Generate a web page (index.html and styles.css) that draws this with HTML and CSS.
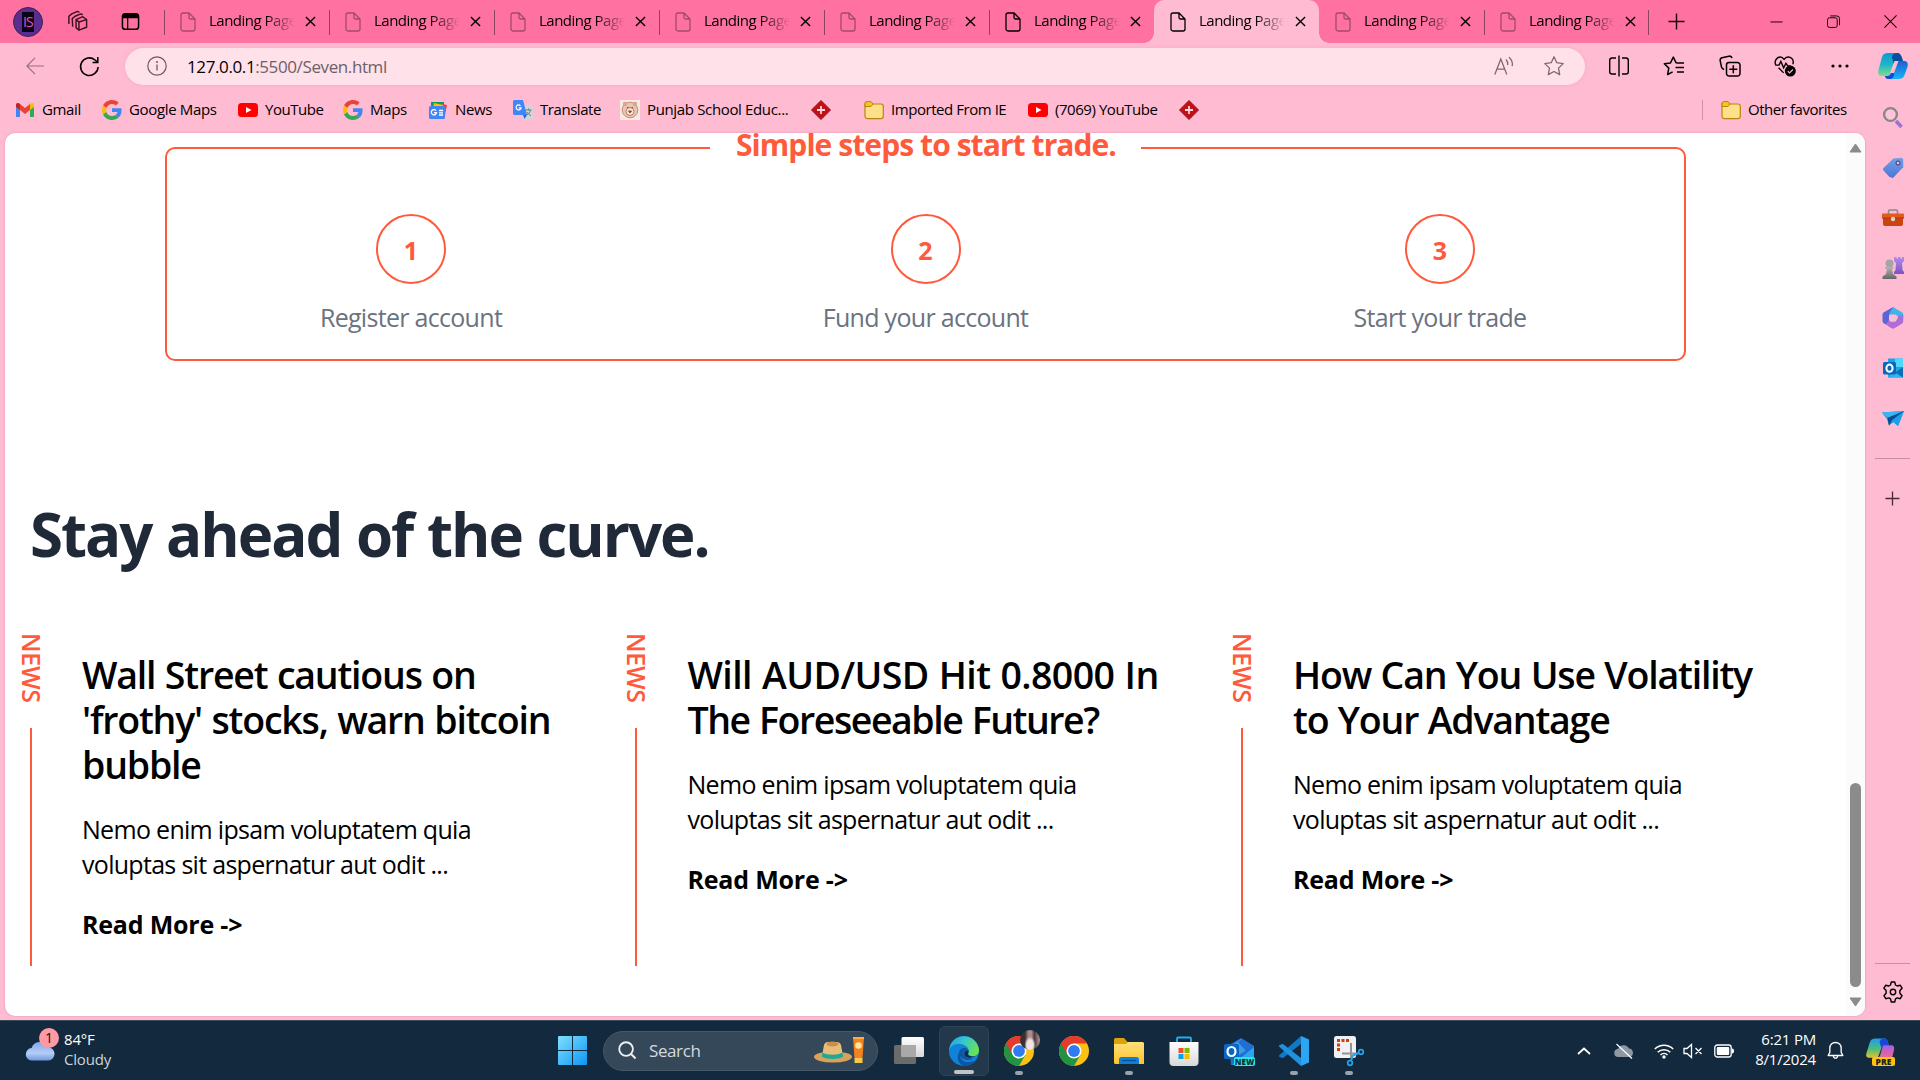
FILE: index.html
```html
<!DOCTYPE html>
<html lang="en">
<head>
<meta charset="utf-8">
<title>Landing Page</title>
<link rel="stylesheet" href="styles.css">
</head>
<body>
<svg class="defs" aria-hidden="true">
  <defs>
    <linearGradient id="gBlue" x1="0" y1="0" x2="1" y2="1"><stop offset="0" stop-color="#7fe0ff"/><stop offset="1" stop-color="#0c96f5"/></linearGradient>
    <linearGradient id="gTag" x1="0" y1="0" x2="0" y2="1"><stop offset="0" stop-color="#6f9fe8"/><stop offset="1" stop-color="#4a78d6"/></linearGradient>
    <linearGradient id="gCopA" x1="0" y1="0" x2="0" y2="1"><stop offset="0" stop-color="#0b9ad6"/><stop offset=".5" stop-color="#1fb5c9"/><stop offset="1" stop-color="#7be08a"/></linearGradient>
    <linearGradient id="gCopB" x1="0" y1="0" x2="0" y2="1"><stop offset="0" stop-color="#1f5fd0"/><stop offset="1" stop-color="#18b4f8"/></linearGradient>
    <linearGradient id="gCopC" x1="0" y1="0" x2="0" y2="1"><stop offset="0" stop-color="#1d9cf0"/><stop offset=".55" stop-color="#4bbf7a"/><stop offset="1" stop-color="#e8c22a"/></linearGradient>
    <linearGradient id="gCopD" x1="0" y1="0" x2="0" y2="1"><stop offset="0" stop-color="#a45bf0"/><stop offset="1" stop-color="#ef6a8a"/></linearGradient>
    <linearGradient id="gPurple" x1="0" y1="0" x2="0" y2="1"><stop offset="0" stop-color="#b48af0"/><stop offset="1" stop-color="#7a55c0"/></linearGradient>
    <linearGradient id="gGray" x1="0" y1="0" x2="0" y2="1"><stop offset="0" stop-color="#b5b5b5"/><stop offset="1" stop-color="#666"/></linearGradient>
    <linearGradient id="gFold" x1="0" y1="0" x2="0" y2="1"><stop offset="0" stop-color="#ffe07a"/><stop offset="1" stop-color="#fdc22f"/></linearGradient>
    <linearGradient id="gCloud" x1="0" y1="0" x2="0" y2="1"><stop offset="0" stop-color="#86a8ea"/><stop offset=".6" stop-color="#b4cdf7"/><stop offset="1" stop-color="#6f97e0"/></linearGradient>
    <linearGradient id="gEdgeT" x1="0" y1="0" x2="1" y2=".4"><stop offset="0" stop-color="#1f9fe0"/><stop offset=".5" stop-color="#35c6d0"/><stop offset="1" stop-color="#66e05a"/></linearGradient>
    <linearGradient id="gWhite" x1="0" y1="0" x2="0" y2="1"><stop offset="0" stop-color="#fff"/><stop offset="1" stop-color="#d8d8d8"/></linearGradient>
    <symbol id="page" viewBox="0 0 16 20"><path d="M3 1h6l6 6v10a2 2 0 0 1-2 2H3a2 2 0 0 1-2-2V3a2 2 0 0 1 2-2zM9 1v4.500a1.500 1.500 0 0 0 1.500 1.500H15" fill="none" stroke="currentColor" stroke-width="1.300"/></symbol>
    <symbol id="x" viewBox="0 0 12 12"><path d="M1 1l10 10M11 1L1 11" fill="none" stroke="currentColor" stroke-width="1.500"/></symbol>
    <symbol id="google" viewBox="0 0 48 48"><path fill="#ea4335" d="M24 9.500c3.540 0 6.710 1.220 9.210 3.600l6.850-6.850C35.900 2.380 30.470 0 24 0 14.620 0 6.510 5.380 2.560 13.220l7.980 6.190C12.430 13.720 17.740 9.500 24 9.500z"/><path fill="#4285f4" d="M46.980 24.550c0-1.570-.15-3.090-.38-4.550H24v9.020h12.940c-.58 2.960-2.260 5.480-4.780 7.180l7.730 6c4.510-4.180 7.090-10.360 7.090-17.650z"/><path fill="#fbbc05" d="M10.530 28.590c-.48-1.450-.76-2.990-.76-4.590s.27-3.140.76-4.590l-7.980-6.190C.92 16.460 0 20.120 0 24c0 3.880.92 7.540 2.560 10.780l7.970-6.190z"/><path fill="#34a853" d="M24 48c6.480 0 11.930-2.130 15.890-5.810l-7.730-6c-2.150 1.450-4.920 2.300-8.160 2.300-6.260 0-11.570-4.220-13.470-9.910l-7.980 6.190C6.510 42.620 14.620 48 24 48z"/></symbol>
    <symbol id="youtube" viewBox="0 0 20 20"><rect y="3" width="20" height="14" rx="3.500" fill="#f00"/><path d="M8 7l5.500 3L8 13z" fill="#fff"/></symbol>
    <symbol id="diamond" viewBox="0 0 20 20"><path d="M10 .5L19.500 10 10 19.500.5 10z" fill="#c01118" stroke="#a00c12" stroke-linejoin="round"/><path d="M10 6v8M6 10h8" stroke="#ffd5d5" stroke-width="1.800"/></symbol>
    <symbol id="folder" viewBox="0 0 20 20"><path d="M1 4.500A2.500 2.500 0 0 1 3.500 2h3l2 2H17a2.300 2.300 0 0 1 2.300 2.300v10A2.300 2.300 0 0 1 17 18.600H3.500A2.500 2.500 0 0 1 1 16.100z" fill="#ffe08a" stroke="#b8860b" stroke-width="1.200"/><path d="M1 6.500V4a2 2 0 0 1 2-2.400h4L9 4 7 6.500z" fill="#f6c524" stroke="#b8860b"/></symbol>
    <symbol id="chrome" viewBox="0 0 30 30"><circle cx="15" cy="15" r="15" fill="#fbc116"/><path d="M2 7.500A15 15 0 0 0 15 30l6.500-11.200L15 15z" fill="#229342"/><path d="M2 7.500A15 15 0 0 1 28 7.500H15L8.500 18.700z" fill="#e33b2e"/><circle cx="15" cy="15" r="7.500" fill="#fff"/><circle cx="15" cy="15" r="5.900" fill="#2f7bf2"/></symbol>
  </defs>
</svg>

<div class="window">
  <header class="tabstrip">
    <div class="profile"><span class="profile-text">IS</span></div>
    <svg class="ws" viewBox="0 0 24 24"><g fill="none" stroke="#3b1020" stroke-width="1.500" stroke-linejoin="round"><path d="M10.500 10l7-3 4 3v8l-8 3-3-2.500zM7 17.500L6.500 9l3-2.500 6-2.500 2 1M3 14.500L3 6.500l3-2.500 6-2.500 2 1"/><path d="M13.500 12.500V21M10.500 10l3 2.500 8-2.500"/></g></svg>
    <svg class="ta" viewBox="0 0 20 20"><rect x="1.500" y="1.800" width="17" height="16.400" rx="3" fill="none" stroke="#000" stroke-width="1.600"/><path d="M1.500 6.500V4a2.500 2.500 0 0 1 2.500-2.500h12A2.500 2.500 0 0 1 18.500 4v2.500z"/><path d="M7 6v12" stroke="#000" stroke-width="1.400"/></svg>
    <nav class="tabs">
      <div class="tab"><svg class="fav"><use href="#page"/></svg><span class="tab-title">Landing Page</span><svg class="close"><use href="#x"/></svg></div>
      <div class="tab"><svg class="fav"><use href="#page"/></svg><span class="tab-title">Landing Page</span><svg class="close"><use href="#x"/></svg></div>
      <div class="tab"><svg class="fav"><use href="#page"/></svg><span class="tab-title">Landing Page</span><svg class="close"><use href="#x"/></svg></div>
      <div class="tab"><svg class="fav"><use href="#page"/></svg><span class="tab-title">Landing Page</span><svg class="close"><use href="#x"/></svg></div>
      <div class="tab"><svg class="fav"><use href="#page"/></svg><span class="tab-title">Landing Page</span><svg class="close"><use href="#x"/></svg></div>
      <div class="tab loaded"><svg class="fav"><use href="#page"/></svg><span class="tab-title">Landing Page</span><svg class="close"><use href="#x"/></svg></div>
      <div class="tab loaded active"><svg class="fav"><use href="#page"/></svg><span class="tab-title">Landing Page</span><svg class="close"><use href="#x"/></svg></div>
      <div class="tab no-sep"><svg class="fav"><use href="#page"/></svg><span class="tab-title">Landing Page</span><svg class="close"><use href="#x"/></svg></div>
      <div class="tab last"><svg class="fav"><use href="#page"/></svg><span class="tab-title">Landing Page</span><svg class="close"><use href="#x"/></svg></div>
    </nav>
    <svg class="newtab" viewBox="0 0 18 18"><path d="M9 .5v17M.5 9h17" stroke="#1c060d" stroke-width="1.500"/></svg>
    <div class="winctl">
      <svg viewBox="0 0 14 14"><path d="M.5 7.500h13" stroke="#000"/></svg>
      <svg viewBox="0 0 14 14"><rect x=".6" y="3" width="10.400" height="10.400" rx="2" fill="none" stroke="#000"/><path d="M3.500 1h7a3 3 0 0 1 3 3v7" fill="none" stroke="#000"/></svg>
      <svg viewBox="0 0 14 14"><path d="M.5.5l13 13M13.500.5l-13 13" stroke="#000" stroke-width="1.100"/></svg>
    </div>
  </header>

  <div class="body">
    <div class="main">
      <div class="toolbar">
        <svg class="back" viewBox="0 0 20 20"><path d="M20 10H1M10 1l-9 9 9 9" fill="none" stroke="#9d6d7e" stroke-width="1.300"/></svg>
        <svg class="reload" viewBox="0 0 22 22"><path d="M20 11.500a9.200 9.200 0 1 1-3.200-7.300L19.500 6.500M19.700 1v5.700h-5.500" fill="none" stroke="#000" stroke-width="1.600"/></svg>
        <div class="address">
          <svg class="info" viewBox="0 0 20 20"><circle cx="10" cy="10" r="9.200" fill="none" stroke="#6b5b61" stroke-width="1.200"/><path d="M10 8.500v6" stroke="#6b5b61" stroke-width="1.300"/><circle cx="10" cy="5.900" r="1" fill="#6b5b61"/></svg>
          <span class="url"><b>127.0.0.1</b>:5500/Seven.html</span>
          <svg class="aloud" viewBox="0 0 20 20"><path d="M.8 18.500L6.800 3l6 15.500M3 13.200h7.600M12 3.500c1.500 1.500 2 3.500 1.700 5.500M15 1.200c2.600 2.300 3.800 5.500 3.200 9" fill="none" stroke="#7c6a70" stroke-width="1.300"/></svg>
          <svg class="star" viewBox="0 0 22 22"><path d="M11 1.800l2.800 5.900 6.400.9-4.700 4.500 1.200 6.500-5.700-3.100-5.700 3.100 1.200-6.500L1.800 8.600l6.400-.9z" fill="none" stroke="#7c6a70" stroke-width="1.300" stroke-linejoin="round"/></svg>
        </div>
        <div class="tools">
          <svg viewBox="0 0 22 22"><path d="M8 3H4a2.300 2.300 0 0 0-2.300 2.300v11.400A2.300 2.300 0 0 0 4 19h4M14 3h4a2.300 2.300 0 0 1 2.300 2.300v11.400A2.300 2.300 0 0 1 18 19h-4M11 .5v21" fill="none" stroke="#000" stroke-width="1.400"/></svg>
          <svg viewBox="0 0 22 22"><path d="M13.500 8L13 7.600l-2.700-5.500-2.800 5.800-6.200.9 4.500 4.300-1.200 6.500 5-2.800M13.500 8H21M12.500 12.500H21M14 17h7" fill="none" stroke="#000" stroke-width="1.500" stroke-linejoin="round"/></svg>
          <svg viewBox="0 0 22 22"><path d="M5 14.500L3.600 13.600A3 3 0 0 1 2.500 12L1.200 5.800A2.600 2.600 0 0 1 3 2.800l7-1.600a2.600 2.600 0 0 1 3 2M10 7.500h8.500A2.500 2.500 0 0 1 21 10v8.500a2.500 2.500 0 0 1-2.500 2.500H10a2.500 2.500 0 0 1-2.500-2.500V10A2.500 2.500 0 0 1 10 7.500zM14.300 10.300v8M10.300 14.300h8" fill="none" stroke="#000" stroke-width="1.500"/></svg>
          <svg viewBox="0 0 24 24"><path d="M2 11C-.5 6 4 1 8.500 2.500L11 4.700l2.500-2.200C18 1 22.500 5 20.500 10M1.500 11h4l2-4 3 7 2.500-5 2 3h3M5 14l5.500 5.500" fill="none" stroke="#000" stroke-width="1.500"/><circle cx="17.800" cy="17.500" r="6"/><path d="M15 17.600l2 2 3.600-3.800" fill="none" stroke="#ffbbd2" stroke-width="1.300"/></svg>
          <svg viewBox="0 0 22 22"><circle cx="3" cy="11" r="1.600"/><circle cx="10" cy="11" r="1.600"/><circle cx="17" cy="11" r="1.600"/></svg>
        </div>
      </div>

      <div class="favorites">
        <div class="bm"><svg viewBox="0 0 20 20"><path d="M1 17V5l4 3v9z" fill="#4285f4"/><path d="M15 17V8l4-3v12z" fill="#34a853"/><path d="M5 10V4l5 4 5-4v6l-5 4z" fill="#ea4335"/><path d="M1 7V4.500C1 2.800 3 2.500 4 3.300L5 4v6z" fill="#c5221f"/><path d="M19 7V4.500c0-1.700-2-2-3-1.200L15 4v6z" fill="#fbbc04"/></svg><span>Gmail</span></div>
        <div class="bm"><svg><use href="#google"/></svg><span>Google Maps</span></div>
        <div class="bm"><svg><use href="#youtube"/></svg><span class="snug">YouTube</span></div>
        <div class="bm"><svg><use href="#google"/></svg><span>Maps</span></div>
        <div class="bm"><svg viewBox="0 0 20 20"><path d="M3 2h13v6H3z" fill="#0c9d58"/><path d="M14 4l5 1-2 10h-3z" fill="#ea4335"/><path d="M6 3l9 2v3H5z" fill="#ffc107"/><rect x="1" y="6" width="16" height="13" rx="1.500" fill="#4285f4"/><path d="M8 10.700a2.600 2.600 0 1 0 .5 2H6M11 10.500h4M11 12.800h4M11 15h4" fill="none" stroke="#fff" stroke-width="1.300"/></svg><span>News</span></div>
        <div class="bm"><svg viewBox="0 0 20 20"><rect x="8" y="5" width="12" height="14.500" rx="1.500" fill="#d4d4d8"/><path d="M1.500 0H10l4 15H1.500A1.500 1.500 0 0 1 0 13.500v-12A1.500 1.500 0 0 1 1.500 0z" fill="#4285f4"/><path d="M7.500 5.800a2.500 2.500 0 1 0 .6 2H5.800" fill="none" stroke="#fff" stroke-width="1.200"/><path d="M12.500 10h6M15.500 8.500V10M17.500 10c-.5 2.500-2 4-3.500 5M14 12c1 2 2.500 3 4 3.500" fill="none" stroke="#607d8b"/><path d="M10 15h4l-2.500 4z" fill="#3067d6"/></svg><span class="snug">Translate</span></div>
        <div class="bm"><svg viewBox="0 0 20 20"><rect width="20" height="20" fill="#f6ebe4"/><circle cx="10" cy="10" r="7.800" fill="#e9c5b2" stroke="#c98f76"/><circle cx="5" cy="4" r="2.200" fill="#d8a58e"/><circle cx="15" cy="4" r="2.200" fill="#d8a58e"/><circle cx="10" cy="11.500" r="4" fill="#f7e5db" stroke="#b87a60"/><path d="M7 7.500h1.500M11.500 7.500H13M8.500 11h3L10 13z" stroke="#8a5040" fill="#8a5040"/></svg><span>Punjab School Educ...</span></div>
        <div class="bm"><svg><use href="#diamond"/></svg></div>
        <div class="bm"><svg><use href="#folder"/></svg><span class="snug">Imported From IE</span></div>
        <div class="bm"><svg><use href="#youtube"/></svg><span class="snug">(7069) YouTube</span></div>
        <div class="bm"><svg><use href="#diamond"/></svg></div>
        <div class="bm other"><svg><use href="#folder"/></svg><span class="snug">Other favorites</span></div>
      </div>

      <div class="viewport">
        <main class="page">
          <fieldset class="steps">
            <legend>Simple steps to start trade.</legend>
            <div class="step-grid">
              <div class="step"><span class="num">1</span><p>Register account</p></div>
              <div class="step"><span class="num">2</span><p>Fund your account</p></div>
              <div class="step"><span class="num">3</span><p>Start your trade</p></div>
            </div>
          </fieldset>
          <h1>Stay ahead of the curve.</h1>
          <section class="news">
            <article class="card">
              <div class="rail"><span>NEWS</span></div>
              <div class="content">
                <h2>Wall Street cautious on<br>'frothy' stocks, warn bitcoin<br>bubble</h2>
                <p>Nemo enim ipsam voluptatem quia<br>voluptas sit aspernatur aut odit ...</p>
                <a>Read More -&gt;</a>
              </div>
            </article>
            <article class="card">
              <div class="rail"><span>NEWS</span></div>
              <div class="content">
                <h2><span class="loose">Will AUD/USD Hit 0.8000 In</span><br><span class="tight">The Foreseeable Future?</span></h2>
                <p>Nemo enim ipsam voluptatem quia<br>voluptas sit aspernatur aut odit ...</p>
                <a>Read More -&gt;</a>
              </div>
            </article>
            <article class="card">
              <div class="rail"><span>NEWS</span></div>
              <div class="content">
                <h2>How Can You Use Volatility<br>to Your Advantage</h2>
                <p>Nemo enim ipsam voluptatem quia<br>voluptas sit aspernatur aut odit ...</p>
                <a>Read More -&gt;</a>
              </div>
            </article>
          </section>
        </main>
        <div class="scrollbar">
          <svg viewBox="0 0 13 10"><path d="M6.500 1L12 9H1z" fill="#8b8b8b" stroke="#8b8b8b" stroke-linejoin="round"/></svg>
          <div class="thumb"></div>
          <svg viewBox="0 0 13 10"><path d="M6.500 9L12 1H1z" fill="#8b8b8b" stroke="#8b8b8b" stroke-linejoin="round"/></svg>
        </div>
      </div>
    </div>

    <aside class="sidebar">
      <svg class="copilot" viewBox="0 0 30 28"><path d="M10 1h9c3 0 4 2 5 5l1 3h-6c-2 0-3 1-3.500 3L13 21c-.5 2-1.500 3-3.500 3H4c-3 0-4.500-2-3.500-6L4 5c1-3 3-4 6-4z" fill="url(#gCopA)"/><path d="M19 1c3 0 4 2 5 5l1 3h-6c-2 0-3 1-3.500 3L14 5c.8-3 2-4 5-4z" fill="#0a4f9a"/><path d="M20 27h-9c-3 0-3.500-1-4-3h2.500c2 0 3-1 3.500-3l3-10c.5-1.500 1.500-2 3-2h7c3 0 4.500 2 3.500 6l-3 8c-1 3-3 4-6.500 4z" fill="url(#gCopB)"/><path d="M11 27c-3 0-3.500-1-4-3h2.500c2 0 3-1 3.500-3l1-3 2 4c0 3-2 5-5 5z" fill="#1746d8"/><path d="M16.500 9h4l-4.500 12h-4z" fill="#ffbbd2"/></svg>
      <svg viewBox="0 0 22 22"><path d="M14 14l5.500 6" stroke="#9a70dc" stroke-width="3.600"/><circle cx="8.500" cy="7.500" r="6.400" fill="#ffc4d8" stroke="#888" stroke-width="2.400"/></svg>
      <svg viewBox="0 0 22 22"><path d="M11.500 1.500l8-.8 1.700 1.600v8L11 21 7.500 20 1.500 13.500 1 11.500z" fill="url(#gTag)"/><circle cx="16" cy="6" r="2" fill="#ffbbd2" stroke="#3a2a78"/></svg>
      <svg viewBox="0 0 22 22"><path d="M6.500 7V4.500A1.500 1.500 0 0 1 8 3h6a1.500 1.500 0 0 1 1.500 1.500V7" fill="none" stroke="#8a8a8a" stroke-width="1.600"/><path d="M1 6.500h20a1 1 0 0 1 1 1V11H0V7.500a1 1 0 0 1 1-1z" fill="#e55a1c"/><path d="M1 11h20v6a2 2 0 0 1-2 2H3a2 2 0 0 1-2-2z" fill="#cb4410"/><path d="M0 11h22" stroke="#a83408"/><circle cx="11" cy="12" r="2.200" fill="#d4d4d4"/></svg>
      <svg viewBox="0 0 22 22"><path d="M12 1V0h2.500v1.500H16V0h2.500v1.500H20V0h2v4l-2 2 .5 7 1.500 2v2H12v-2l1.500-2 .5-7-2-2z" fill="url(#gPurple)"/><circle cx="7.500" cy="6.500" r="4" fill="#a5a5a5"/><path d="M3 10h9l-1 2h-1l1 5 3.500 2.500V22H.5v-2.500L4 17l1-5H3z" fill="url(#gGray)"/></svg>
      <svg viewBox="0 0 22 22"><path d="M11 .3L1.800 5.500C1 6 .7 6.700.7 7.500v7c0 .8.400 1.500 1.100 1.900L7 13V8l4.500-2.500L14 2z" fill="#6f6be0"/><path d="M11 .3l9 5c.8.5 1.200 1.200 1.200 2V12L16 9 13.500 8h-5L7 8l-.5-4.500z" fill="#42b4ea"/><path d="M21.200 8v6.500c0 .8-.4 1.500-1.200 2L11 21.800 6 19l7.500-4.500L15.500 11l.5-2z" fill="#9a74dc"/><path d="M1.500 16l5.500-3 1.500 1.500h5L21 12v2.500c0 .8-.4 1.500-1.200 2L12.500 21c-1 .6-2 .6-3 0z" fill="#b36bd6"/><path d="M11 .3L1.800 5.500C1 6 .7 6.700.7 7.500v7l3 3L7 13V7z" fill="#5a66d8"/><path d="M8.500 7.500h5l2.200 3.600-2.200 3.400h-5L6.700 11z" fill="#ffbbd2"/></svg>
      <svg viewBox="0 0 22 22"><path d="M6 1.500h14a1 1 0 0 1 1 1v18H6z" fill="#1aa4e4"/><path d="M13 1.500h8V10h-8z" fill="#4fd8ff"/><path d="M12 15l9-5v10.500H6z" fill="#28b7f0"/><path d="M13 15.500l8-5.500v10.500z" fill="#0f6db5"/><rect x="1" y="5" width="13" height="12.500" rx="1.500" fill="#0868c0"/><ellipse cx="7.500" cy="11.200" rx="3.100" ry="3.600" fill="none" stroke="#fff" stroke-width="2"/></svg>
      <svg viewBox="0 0 22 22"><path d="M0 5.500L22 4l-6 15-4.500-4L7 18.500 5 12z" fill="#1b8fdc"/><path d="M0 5.500L22 4 5.500 10.500z" fill="#37b8f2"/><path d="M22 4L5.500 11 7 18.500 10 13z" fill="#074c8c"/><path d="M22 4l-6 15-6-5z" fill="#209fe8"/></svg>
      <hr>
      <svg class="plus" viewBox="0 0 16 16"><path d="M8 .5v15M.5 8h15" stroke="#4a2a35" stroke-width="1.400"/></svg>
      <div class="spacer"></div>
      <hr>
      <svg class="gear" viewBox="0 0 22 22"><path d="M9.300 1h3.400l.8 3 1.700 1 3-.8 1.900 3-2.200 2.300v2.800l2.200 2.400-1.900 3-3-.8-1.700 1-.8 3.100H9.300l-.8-3.100-1.700-1-3 .8-1.900-3 2.200-2.400V9.500L1.900 7.200l1.900-3 3 .8 1.700-1z" fill="none" stroke="#000" stroke-width="1.400" stroke-linejoin="round"/><circle cx="11" cy="11" r="2.700" fill="none" stroke="#000" stroke-width="1.400"/></svg>
    </aside>
  </div>

  <footer class="taskbar">
    <div class="weather">
      <div class="cloud"><svg viewBox="0 0 30 22"><path d="M7 21.500a6.500 6.500 0 0 1-.8-13A9 9 0 0 1 23 7.500a7 7 0 0 1 .5 14z" fill="url(#gCloud)"/></svg><span class="badge">1</span></div>
      <div class="wtext"><span>84°F</span><span class="dim">Cloudy</span></div>
    </div>
    <div class="apps">
      <svg class="start" viewBox="0 0 29 29"><path d="M1 0h13v14H0V1a1 1 0 0 1 1-1zM15 0h13a1 1 0 0 1 1 1v13H15zM0 15h14v14H1a1 1 0 0 1-1-1zM15 15h14v13a1 1 0 0 1-1 1H15z" fill="url(#gBlue)"/></svg>
      <div class="search">
        <svg class="mag" viewBox="0 0 20 20"><circle cx="8.500" cy="8.500" r="7.200" fill="none" stroke="#eef1f4" stroke-width="1.900"/><path d="M13.500 13.500l5 5" stroke="#eef1f4" stroke-width="2.100"/></svg>
        <span>Search</span>
        <svg class="hat" viewBox="0 0 50 28"><ellipse cx="19" cy="20" rx="19" ry="5.500" fill="#d9a25a"/><path d="M8 19L10 8c1-4 5-3 8-3s8-1 9 3l2 11c-5 3-16 3-21 0z" fill="#e8bd7c"/><ellipse cx="18.500" cy="7" rx="6" ry="2.500" fill="#c6914c"/><path d="M8.500 15.500c5 3 15 3 20 0l.7 4.200c-6 3-15.500 3-21.400 0z" fill="#20a890"/><path d="M39 0h11l-1.500 21h-8z" fill="#f58220"/><path d="M39 0h11v2H39z" fill="#ffad42"/><circle cx="44.500" cy="8.500" r="3.300" fill="#ffe7a0"/><path d="M40.500 21h8v5h-8z" fill="#f7c64a"/></svg>
      </div>
      <div class="app"><svg viewBox="0 0 30 30"><rect x="0" y="9" width="22" height="19" rx="1.500" fill="#6b6b6b"/><rect x="7.500" y="1" width="22.500" height="20" rx="1.500" fill="url(#gWhite)"/><path d="M7.500 9H22v12H7.500z" fill="#a9a9a9"/></svg></div>
      <div class="app current"><svg viewBox="0 0 30 30"><circle cx="15" cy="15" r="15" fill="#0f83d8"/><path d="M1 10A15 15 0 0 1 30 14c.5 5-5 7.500-9.500 5.500-2-1-1-2-.7-3.500C20.500 11 14 7 8 8 4.500 8.500 2 10 0 14z" fill="url(#gEdgeT)"/><path d="M11 20c1 6 8 8 16.500 4A15 15 0 0 1 15 30c-5-1-9-8-4-16 3-3 7-2 8 0-3 0-5 2-4.500 4 .7 3 5 5 10 4-4 3-10 3-13.500-2z" fill="#0d56a6"/><path d="M15.500 19c-1-3 1-5 4-4.500.5 2-1 3-.3 4.300 1 1.500 4 2 6.800 1.200-4 2.500-9 2.500-10.500-1z" fill="#132a40"/></svg></div>
      <div class="app open"><svg viewBox="0 0 30 30"><use href="#chrome"/></svg><span class="avatar"></span></div>
      <div class="app"><svg viewBox="0 0 30 30"><use href="#chrome"/></svg></div>
      <div class="app open"><svg viewBox="0 0 30 30"><path d="M0 3.500A1.500 1.500 0 0 1 1.500 2H10l3.500 4H28v6H0z" fill="#e0a007"/><path d="M0 8h12l2-2h14.500A1.500 1.500 0 0 1 30 7.500V28H1.500A1.500 1.500 0 0 1 0 26.500z" fill="url(#gFold)"/><path d="M5 28v-4.500A2.500 2.500 0 0 1 7.500 21h15a2.500 2.500 0 0 1 2.500 2.500V28z" fill="#0f7fd6"/><path d="M8 24.500h14" stroke="#0a4f94" stroke-width="1.300"/></svg></div>
      <div class="app"><svg viewBox="0 0 30 30"><path d="M8 7V2.500A1 1 0 0 1 9 1.500h12a1 1 0 0 1 1 1V7" fill="none" stroke="#22b0f0" stroke-width="1.800"/><path d="M.5 6h29v20a4 4 0 0 1-4 4h-21a4 4 0 0 1-4-4z" fill="url(#gWhite)"/><path d="M9.500 12h5v5h-5z" fill="#f25022"/><path d="M15.500 12h5v5h-5z" fill="#7fba00"/><path d="M9.500 18h5v5h-5z" fill="#00a4ef"/><path d="M15.500 18h5v5h-5z" fill="#ffb900"/></svg></div>
      <div class="app"><svg viewBox="0 0 30 30"><path d="M5 9L17 2l13 8v17a2 2 0 0 1-2 2H7z" fill="#1b6fd0"/><path d="M8 9l9-6 12 7-14 9z" fill="#3d9ae6"/><path d="M14 6l4-3 12 7-8 5z" fill="#1f6fd0"/><path d="M30 11v16a2 2 0 0 1-2 2H8z" fill="#2fa4ee"/><rect x="0" y="8" width="15" height="15" rx="1.500" fill="#0a66c4"/><ellipse cx="7.500" cy="15.500" rx="4" ry="4.500" fill="none" stroke="#fff" stroke-width="2.200"/></svg><span class="new">NEW</span></div>
      <div class="app open"><svg viewBox="0 0 30 30"><path d="M22 0l8 3.500v23L22 30z" fill="#2ba7f2"/><path d="M22 0v8L4 22l-1.500-.2L0 20.500v-1z" fill="#1279c8"/><path d="M22 30v-8L4 8l-1.500.2L0 9.500v1z" fill="#2090e0"/></svg></div>
      <div class="app open"><svg viewBox="0 0 30 30"><rect width="22" height="22" rx="2.500" fill="#f1f1f3"/><path d="M4.500 15V4.500h11" fill="none" stroke="#d23f0d" stroke-width="3" stroke-dasharray="3 1.500"/><path d="M17 7v15M8 17.500h15" stroke="#909498" stroke-width="2"/><circle cx="27" cy="16" r="2.300" fill="none" stroke="#22a4ee" stroke-width="1.700"/><circle cx="16" cy="27" r="2.300" fill="none" stroke="#22a4ee" stroke-width="1.700"/><path d="M17 24.500l2-5 5.500-2.500" fill="none" stroke="#22a4ee" stroke-width="2"/></svg></div>
    </div>
    <div class="tray">
      <svg class="t-chev" viewBox="0 0 14 8"><path d="M1 7l6-5.500L13 7" fill="none" stroke="#fff" stroke-width="1.800"/></svg>
      <svg class="t-cloud" viewBox="0 0 20 16"><path d="M4.500 14A4 4 0 0 1 4 6 6 6 0 0 1 15 5.500a4.300 4.300 0 0 1 .5 8.500z" fill="#8d98a3"/><path d="M2.500 1L18 15.500" stroke="#fff" stroke-width="1.200"/></svg>
      <svg class="t-wifi" viewBox="0 0 20 16"><g fill="none" stroke="#fff" stroke-width="1.500"><path d="M.8 6a13 13 0 0 1 18.400 0M3.700 9.200a9 9 0 0 1 12.600 0M6.500 12a5 5 0 0 1 7 0"/></g><circle cx="10" cy="14" r="1.700" fill="#fff"/></svg>
      <svg class="t-vol" viewBox="0 0 20 16"><path d="M1 5.500h3L8.500 1.500v13L4 10.500H1zM12.500 5l6 6M18.500 5l-6 6" fill="none" stroke="#fff" stroke-width="1.300"/></svg>
      <svg class="t-bat" viewBox="0 0 20 14"><rect x=".8" y="1" width="16.400" height="12" rx="2.500" fill="none" stroke="#fff" stroke-width="1.300"/><rect x="2.800" y="3" width="12.400" height="8" rx="1" fill="#fff"/><path d="M18 4.500c1.500 0 2 1 2 2.500s-.5 2.500-2 2.500z" fill="#fff"/></svg>
      <div class="clock"><span>6:21 PM</span><span>8/1/2024</span></div>
      <svg class="t-bell" viewBox="0 0 18 20"><path d="M9 1.500c-3.500 0-6 2.500-6 6V12L1.200 15.300h15.600L15 12V7.500c0-3.500-2.500-6-6-6zM6.700 15.500c.3 3.500 4.300 3.500 4.600 0" fill="none" stroke="#fff" stroke-width="1.400" stroke-linejoin="round"/></svg>
      <div class="cop2"><svg viewBox="0 0 30 28"><path d="M10 1h9c2 0 3 1 4 5l.5 2h-4c-2 0-3 1-3.500 3L13 19c-.5 1.500-1.500 2-3.500 2H4c-3 0-4.500-1-3.500-5L4 5c1-3 3-4 6-4z" fill="url(#gCopC)"/><path d="M19 1c2 0 3 1 4 5l.5 2h-4c-2 0-3 1-3.500 3L14 5c.8-3 2-4 5-4z" fill="#1746d8"/><path d="M19 8h7c3 0 3.500 2 3 5l-2 8H12c2-1 2.500-2 3-4l2-7c.3-1.300 1-2 2-2z" fill="url(#gCopD)"/></svg><span class="pre">PRE</span></div>
    </div>
  </footer>
</div>
</body>
</html>
```
FILE: styles.css
```css
* { box-sizing: border-box; }
body, p, h1, h2, hr { margin: 0; }
body {
  width: 1920px;
  height: 1080px;
  overflow: hidden;
  font-family: "Open Sans", "Noto Sans", sans-serif;
  color: #000;
}
svg { display: block; flex: none; overflow: visible; }
.defs { position: absolute; width: 0; height: 0; }

.window { display: flex; flex-direction: column; width: 1920px; height: 1080px; background: #ffbbd2; }

/* Tab strip */
.tabstrip { display: flex; align-items: center; height: 43px; background: #ff71a1; }
.profile {
  display: flex; align-items: center; justify-content: center;
  width: 30px; height: 30px; margin: 0 23px 0 13px;
  border-radius: 50%; background: #5b2d90; border: 1px solid #3c2350;
}
.profile-text { padding: 1px 1px 2px; background: #0a0510; color: #e04fd2; font-size: 14px; line-height: 17px; letter-spacing: -0.8px; }
.ws { width: 23px; height: 23px; margin-right: 32px; }
.ta { width: 19px; height: 19px; margin-right: 24px; }
.tabs { display: flex; height: 43px; }
.tab {
  position: relative;
  display: flex; align-items: center;
  width: 165px; padding-left: 16px;
  font-size: 15px; letter-spacing: -0.5px;
}
.tab::before { content: ""; position: absolute; left: 0; top: 10px; width: 1px; height: 25px; background: #8c4460; }
.tab.last::after { content: ""; position: absolute; right: 0; top: 10px; width: 1px; height: 25px; background: #8c4460; }
.tab.active::before, .tab.no-sep::before { display: none; }
.fav { width: 16px; height: 20px; margin-right: 13px; color: #a34a6b; }
.loaded .fav { color: #000; }
.tab-title {
  width: 86px; margin-right: 10px; overflow: hidden; white-space: nowrap; line-height: 20px; padding-bottom: 3px;
  -webkit-mask-image: linear-gradient(90deg, #000 56px, transparent 86px);
  mask-image: linear-gradient(90deg, #000 56px, transparent 86px);
}
.close { width: 11px; height: 11px; }
.active { background: #ffbbd2; border-radius: 10px 10px 0 0; }
.active::after {
  content: ""; position: absolute; left: -10px; right: -10px; bottom: 0; height: 10px;
  background:
    radial-gradient(circle at 0 0, transparent 9.5px, #ffbbd2 10px) left / 10px 10px no-repeat,
    radial-gradient(circle at 100% 0, transparent 9.5px, #ffbbd2 10px) right / 10px 10px no-repeat;
}
.newtab { width: 17px; height: 17px; margin-left: 19px; }
.winctl { display: flex; gap: 44px; margin-left: auto; margin-right: 23px; }
.winctl svg { width: 13px; height: 13px; }

.body { display: flex; height: 977px; }
.main { display: flex; flex-direction: column; width: 1865px; }

/* Toolbar */
.toolbar { display: flex; align-items: center; height: 46px; padding-left: 25px; }
.back { width: 20px; height: 18px; margin-right: 34px; }
.reload { width: 21px; height: 21px; margin-right: 25px; }
.address {
  display: flex; align-items: center;
  width: 1460px; height: 37px; padding: 0 20px 0 22px;
  border-radius: 19px; background: #ffe1ea; box-shadow: 0 0 4px #f3aac3;
}
.info { width: 20px; height: 20px; margin-right: 20px; }
.url { font-size: 17px; letter-spacing: -0.39px; color: #6d6066; margin-right: auto; }
.url b { font-weight: 400; color: #000; }
.aloud { width: 20px; height: 20px; margin-right: 29px; }
.star { width: 22px; height: 22px; }
.tools { display: flex; gap: 33.400px; margin-left: 23px; }
.tools svg { width: 22px; height: 22px; }

/* Favorites bar */
.favorites {
  display: grid; align-items: center;
  grid-template-columns: 87px 136px 105px 85px 85px 107px 191px 53px 164px 151px 523px 1fr;
  height: 44px; padding: 0 0 3px 15px;
  font-size: 15px; letter-spacing: -0.35px;
}
.bm { display: flex; align-items: center; gap: 7px; white-space: nowrap; }
.bm svg { width: 20px; height: 20px; }
.bm span { padding-bottom: 1px; }
.bm .snug { letter-spacing: -0.45px; }
.other { height: 20px; padding-left: 18px; border-left: 1px solid #cf93a8; }

/* Web page */
.viewport {
  display: flex; height: 883px; margin-left: 5px; overflow: hidden;
  background: #fff; border-radius: 10px; box-shadow: 0 0 2px #d98ba6;
}
.page { width: 1841px; }
.steps {
  width: 1521px; height: 231px; margin: -3px 0 0 160px; padding: 0;
  border: 2px solid #ff5a3c; border-radius: 10px;
}
.steps legend {
  margin: 0 auto; padding: 0 25px 7px 26px;
  font-size: 30px; font-weight: 700; line-height: 29px; letter-spacing: -0.93px; color: #ff5a3c;
}
.step-grid { display: grid; grid-template-columns: repeat(3, 1fr); gap: 26.5px; margin-top: 48px; }
.step { display: flex; flex-direction: column; align-items: center; }
.num {
  display: flex; align-items: center; justify-content: center;
  width: 70px; height: 70px; padding-top: 2px;
  border: 2px solid #ff5a3c; border-radius: 50%;
  font-size: 25px; font-weight: 700; color: #ff5a3c;
}
.step p { margin-top: 16px; font-size: 25px; line-height: 35px; letter-spacing: -0.7px; color: #6b7280; }
h1 { margin: 143px 0 0 25px; font-size: 60px; line-height: 60px; font-weight: 700; letter-spacing: -2px; word-spacing: 1px; color: #1f2937; }
.news { display: grid; grid-template-columns: repeat(3, 605.5px); margin: 69px 0 0 6px; height: 333px; width: 1816px; }
.card { display: flex; }
.rail { display: flex; flex-direction: column; align-items: center; width: 39px; margin-right: 32px; }
.rail span { writing-mode: vertical-rl; height: 95px; font-size: 25px; font-weight: 600; line-height: 39px; letter-spacing: -0.3px; margin-left: 1px; color: #ff5a3c; }
.rail::after { content: ""; width: 2px; flex: 1; background: #ff5a3c; }
.content { padding-top: 19px; white-space: nowrap; }
.content h2 { font-size: 37.5px; line-height: 45px; font-weight: 600; letter-spacing: -1.2px; word-spacing: 1px; }
.content .loose { letter-spacing: -0.6px; }
.content .tight { letter-spacing: -1.45px; }
.content p { margin: 25px 0; font-size: 25px; line-height: 35px; letter-spacing: -0.7px; }
.content a { font-size: 25px; line-height: 35px; font-weight: 700; letter-spacing: -0.2px; }
.scrollbar { display: flex; flex-direction: column; align-items: center; width: 19px; padding: 10px 0 9px; background: #fbfbfb; }
.scrollbar svg { width: 13px; height: 10px; }
.thumb { width: 11px; height: 204px; margin: auto 0 10px; border-radius: 6px; background: #8b8b8b; }

/* Sidebar */
.sidebar { display: flex; flex-direction: column; align-items: center; width: 55px; }
.sidebar svg { width: 22px; height: 22px; margin-bottom: 28px; }
.sidebar .copilot { width: 30px; height: 28px; margin: 9px 0 27px; }
.sidebar hr { width: 35px; height: 1px; border: 0; margin-top: 1px; background: #c68fa2; }
.sidebar .plus { width: 15px; height: 15px; margin: 32px 0 0; }
.spacer { flex: 1; }
.sidebar .gear { margin: 17px 0 17px; }

/* Taskbar */
.taskbar { display: grid; grid-template-columns: 558px 1fr auto; align-items: center; height: 60px; background: #13293d; border-top: 1px solid #3a4a58; color: #fff; font-size: 15px; line-height: 20px; }
.weather { display: flex; gap: 9px; padding: 0 0 4px 25px; letter-spacing: -0.2px; }
.cloud { position: relative; width: 30px; padding-top: 11px; }
.cloud svg { width: 30px; height: 21px; }
.badge { position: absolute; left: 14px; top: -1px; width: 20px; height: 20px; border-radius: 50%; background: #ff99a4; color: #111; font-size: 14px; text-align: center; }
.wtext { display: flex; flex-direction: column; }
.dim { color: #cdd3d8; }
.apps { display: flex; align-items: center; }
.start { width: 29px; height: 29px; margin-right: 16px; }
.search {
  display: flex; align-items: center;
  width: 275px; height: 40px; margin-right: 6px; padding: 0 13px 0 14px;
  border-radius: 20px; background: #35485a; border: 1px solid #465768;
  font-size: 17px; letter-spacing: -0.4px; color: #d5dade;
}
.mag { width: 19px; height: 19px; margin-right: 12px; }
.hat { width: 50px; height: 28px; margin-left: auto; }
.app { position: relative; display: flex; align-items: center; justify-content: center; width: 50px; height: 50px; margin-right: 5px; border-radius: 6px; }
.app svg { width: 30px; height: 30px; }
.current { background: #24384b; border: 1px solid #2f4356; }
.current::after, .open::after { content: ""; position: absolute; bottom: 1px; width: 20px; height: 4px; border-radius: 2px; background: #c3c3c3; }
.open::after { width: 8px; background: #98a2ac; }
.avatar { position: absolute; right: 4px; top: 4px; width: 20px; height: 20px; border-radius: 50%; background: radial-gradient(ellipse at 50% 75%, #efe6e2 0 22%, transparent 40%), linear-gradient(90deg, #3a3034 0 25%, #a88c8a 42% 58%, #4a383c 72%, #b89a9a); }
.new { position: absolute; left: 20px; top: 31px; width: 21px; height: 9px; border-radius: 2px; background: #2ee6e6; color: #06303a; font-size: 8px; line-height: 9px; font-weight: 800; text-align: center; }
.tray { display: flex; align-items: center; padding-right: 24px; }
.t-chev { width: 14px; height: 8px; margin-right: 23px; }
.t-cloud { width: 20px; height: 16px; margin-right: 20px; }
.t-wifi { width: 20px; height: 16px; margin-right: 9px; }
.t-vol { width: 20px; height: 16px; margin-right: 11px; }
.t-bat { width: 20px; height: 14px; }
.clock { display: flex; flex-direction: column; align-items: flex-end; width: 82px; margin-right: 11px; padding-bottom: 4px; letter-spacing: -0.2px; }
.t-bell { width: 17px; height: 19px; margin-right: 22px; }
.cop2 { position: relative; width: 30px; height: 28px; }
.cop2 svg { width: 29px; height: 28px; }
.pre { position: absolute; left: 6px; top: 20px; width: 23px; height: 9px; border-radius: 2px; background: #fcc60c; color: #222; font-size: 8.500px; line-height: 9px; font-weight: 800; text-align: center; }
```
